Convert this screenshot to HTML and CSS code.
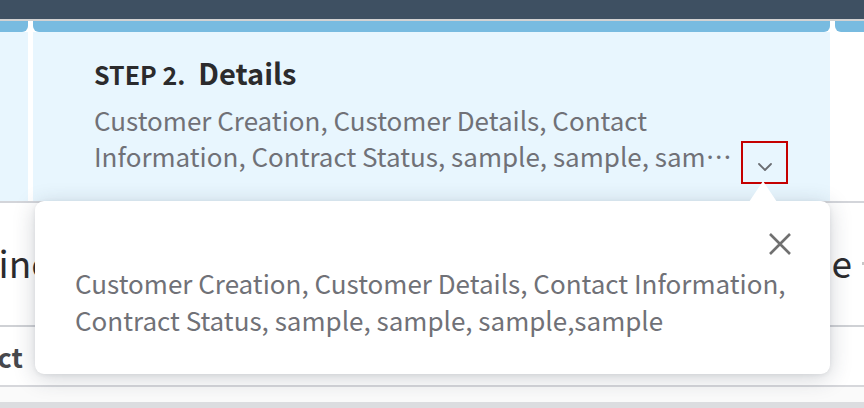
FILE: index.html
```html
<!DOCTYPE html>
<html>
<head>
<meta charset="utf-8">
<link rel="stylesheet" href="styles.css">
</head>
<body>
<div class="page">
  <div class="topbar"></div>
  <div class="steps">
    <div class="step step-prev"><div class="step-tab"></div><div class="step-body"></div></div>
    <div class="step step-current">
      <div class="step-tab"></div>
      <div class="step-body">
        <h2 class="step-title"><span class="step-no">STEP 2.</span><span class="step-name">Details</span></h2>
        <div class="step-desc-row">
          <p class="step-desc"><span class="desc-line">Customer Creation, Customer Details, Contact</span><span class="desc-line clamp">Information, Contract Status, sample, sample, sample,sample</span></p>
          <button class="expand-btn" aria-label="Show all">
            <svg width="16" height="10" viewBox="0 0 16 10"><path d="M2 2 L8 8 L14 2" fill="none" stroke="#6a6d72" stroke-width="1.8" stroke-linecap="round" stroke-linejoin="round"/></svg>
          </button>
        </div>
      </div>
    </div>
    <div class="step step-next"><div class="step-tab"></div><div class="step-body"></div></div>
  </div>
  <div class="content">
    <div class="section-head">
      <div class="section-title left">Timeline</div>
      <div class="section-title right">Phone <span class="sort-mark"></span></div>
    </div>
    <div class="table-head"><span class="col-label">Contact</span></div>
    <div class="table-row"></div>
  </div>

  <div class="popover">
    <div class="popover-arrow"></div>
    <div class="popover-head">
      <button class="close-btn" aria-label="Close">
        <svg width="24" height="24" viewBox="0 0 24 24"><path d="M2 2 L22 22 M22 2 L2 22" fill="none" stroke="#707070" stroke-width="2.6"/></svg>
      </button>
    </div>
    <p class="popover-text">Customer Creation, Customer Details, Contact Information, Contract Status, sample, sample, sample,sample</p>
  </div>
</div>
</body>
</html>
```
FILE: styles.css
```css
* { box-sizing: border-box; }
html, body { margin: 0; padding: 0; }
body {
  width: 864px;
  height: 408px;
  overflow: hidden;
  background: #fff;
  font-family: "Noto Sans CJK JP", "Source Sans Pro", "Lato", sans-serif;
}
.page { position: relative; width: 864px; height: 408px; overflow: hidden; }

.topbar {
  height: 21px;
  background: #3e5062;
  border-bottom: 2px solid #d2d2d2;
}

.steps {
  display: flex;
  gap: 5px;
  height: 182px;
  border-bottom: 2px solid #d3d5da;
}
.step { display: flex; flex-direction: column; }
.step-prev { flex: 0 0 28px; }
.step-current { flex: 0 0 797px; }
.step-next { flex: 1 1 auto; }
.step-tab {
  height: 11px;
  background: #78bbe0;
  flex: none;
}
.step-prev .step-tab { border-bottom-right-radius: 6px; }
.step-current .step-tab { border-bottom-left-radius: 6px; border-bottom-right-radius: 6px; }
.step-next .step-tab { border-bottom-left-radius: 6px; }
.step-body { flex: 1; background: #e8f6fe; }
.step-next .step-body { background: #fff; }
.step-current .step-body { padding: 22px 42px 0 61px; }

.step-title {
  margin: 0;
  display: flex;
  align-items: baseline;
  gap: 13px;
  color: #2b2b2d;
  font-weight: 700;
  line-height: 36px;
}
.step-no { font-size: 25px; }
.step-name { font-size: 29px; }

.step-desc-row {
  display: flex;
  align-items: flex-end;
  gap: 2px;
  margin-top: 10px;
}
.step-desc {
  margin: 0;
  flex: 0 0 645px;
  width: 645px;
  min-width: 0;
  font-size: 26px;
  line-height: 36px;
  color: #707177;
}
.desc-line { display: block; white-space: nowrap; }
.desc-line.clamp { overflow: hidden; text-overflow: ellipsis; }
.expand-btn {
  flex: none;
  width: 47px;
  height: 43px;
  margin-bottom: -10px;
  border: 2px solid #c50000;
  background: transparent;
  padding: 8px 0 0;
  display: flex;
  align-items: center;
  justify-content: center;
  cursor: pointer;
}

.section-head {
  display: flex;
  justify-content: space-between;
  align-items: center;
  height: 124px;
  border-bottom: 2px solid #cfd1d5;
}
.section-title {
  font-size: 37px;
  color: #2b2b2d;
  line-height: 44px;
  margin-top: -4px;
}
.section-title.left { margin-left: -99px; }
.section-title.right { margin-right: -4px; display: flex; align-items: center; gap: 10px; }
.sort-mark { display: inline-block; width: 6px; height: 3px; background: #c8c8c8; margin-top: 2px; }

.table-head {
  height: 60px;
  display: flex;
  align-items: center;
  border-bottom: 2px solid #d6d7db;
}
.col-label {
  font-size: 27px;
  font-weight: 700;
  color: #47484c;
  margin-left: -81px;
}
.table-row {
  height: 21px;
  background: #fafafa;
  border-bottom: 6px solid #dcdde0;
}

.popover {
  position: absolute;
  left: 35px;
  top: 201px;
  width: 795px;
  height: 173px;
  background: #fff;
  border-radius: 9px;
  box-shadow: 0 4px 22px rgba(40, 50, 70, 0.22), 0 1px 4px rgba(40, 50, 70, 0.08);
  padding: 31px 38px 0 40px;
}
.popover-arrow {
  position: absolute;
  top: -20px;
  left: 714px;
  width: 0;
  height: 0;
  border-left: 14px solid transparent;
  border-right: 14px solid transparent;
  border-bottom: 21px solid #fff;
}
.popover-head { display: flex; justify-content: flex-end; }
.close-btn {
  width: 24px;
  height: 24px;
  padding: 0;
  border: 0;
  background: transparent;
  display: block;
  cursor: pointer;
}
.close-btn svg { display: block; }
.popover-text {
  margin: 8px 0 0;
  font-size: 26px;
  line-height: 37px;
  color: #707177;
}
```
